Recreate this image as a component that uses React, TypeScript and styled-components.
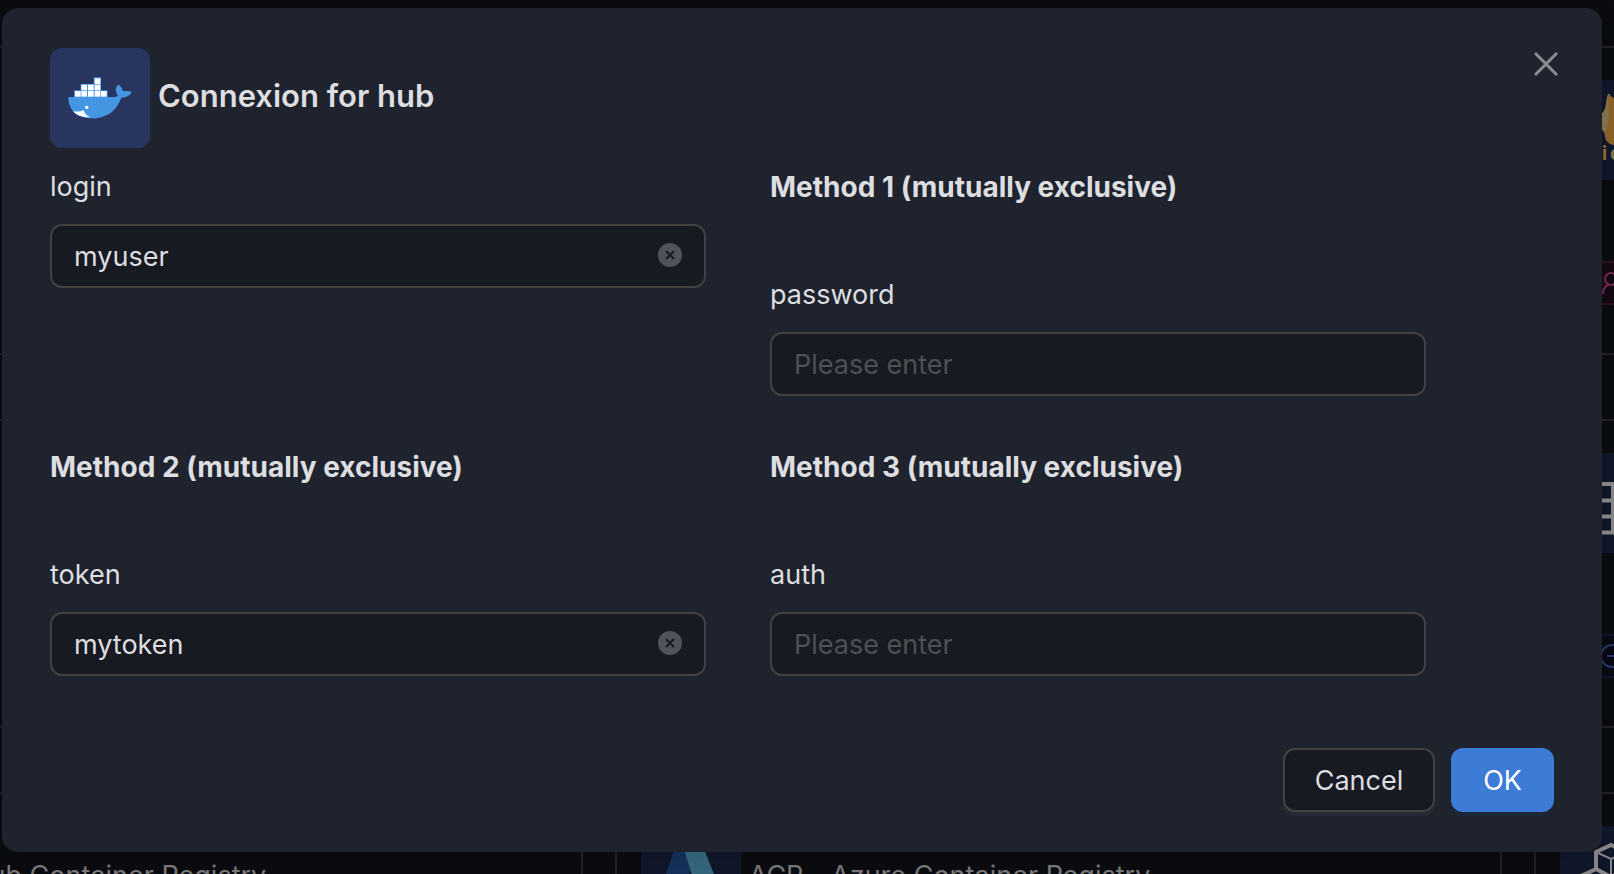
import React, { useState } from "react";
import type { ReactNode } from "react";
import styled, { createGlobalStyle } from "styled-components";

const GlobalStyle = createGlobalStyle`
  *, *::before, *::after { box-sizing: border-box; }
  body {
    margin: 0;
    background: #0b0c10;
    color: #dddee0;
    font-family: Inter, "Liberation Sans", sans-serif;
    font-size: 27px;
    line-height: 46px;
  }
  button, input { font: inherit; color: inherit; }
`;

const Page = styled.div`
  display: flex;
  position: relative;
  height: 100vh;
  overflow: hidden;
`;

const Backdrop = styled.main`
  flex: 1;
  min-width: 0;
  display: grid;
  grid-template-columns: repeat(3, 55vw);
  grid-auto-rows: min-content;
  gap: 64px 32px;
  margin-left: -305px;
  padding-top: 46px;
`;

const Card = styled.article`
  display: flex;
  flex-direction: column;
  align-items: flex-start;
  min-height: 309px;
  padding: 32px 24px 48px;
  border: 2px solid #222222;
`;

const CardHead = styled.div`
  display: flex;
  align-items: center;
  gap: 8px;
  height: 100px;
  color: #7b7b7c;
  white-space: nowrap;
`;

const CardTile = styled.span`
  width: 100px;
  height: 100px;
  background: #11172b;
  svg { display: block; }
`;

const Badge = styled.span<{ $tone: "pink" | "blue" }>`
  display: flex;
  align-items: center;
  width: 160px;
  height: 44px;
  margin: 81px 0 0 24px;
  padding-left: 12px;
  border: 2px solid ${(p) => (p.$tone === "pink" ? "#2d1222" : "#10142b")};
  background: ${(p) => (p.$tone === "pink" ? "#140811" : "#0a0a14")};
  color: ${(p) => (p.$tone === "pink" ? "#732c58" : "#263569")};
`;

const Overlay = styled.div`
  position: absolute;
  inset: 0;
  padding: 8px 12px 22px 2px;
`;

const Dialog = styled.section`
  position: relative;
  padding: 40px 48px;
  border-radius: 16px;
  background: #1f232d;
  box-shadow: 0 12px 32px rgba(0, 0, 0, 0.1);
`;

const Header = styled.header`
  display: flex;
  align-items: center;
  gap: 8px;
  margin-bottom: 16px;
`;

const LogoTile = styled.span`
  width: 100px;
  height: 100px;
  border-radius: 12px;
  background: #28355e;
  svg { display: block; }
`;

const Title = styled.h1`
  margin: 0 0 4px;
  font-size: 31px;
  font-weight: 600;
`;

const CloseButton = styled.button`
  position: absolute;
  top: 34px;
  right: 34px;
  display: grid;
  place-items: center;
  width: 44px;
  height: 44px;
  padding: 0;
  border: 0;
  background: none;
  color: #8b8d93;
`;

const Form = styled.form`
  display: flex;
  flex-direction: column;
`;

const Fields = styled.div`
  display: grid;
  grid-template-columns: 1fr 1fr;
  gap: 48px 64px;
  margin-bottom: 72px;
  padding-right: 128px;
`;

const Method = styled.h2`
  margin: 0 0 62px;
  font-size: 28px;
  font-weight: 700;
`;

const Label = styled.label`
  display: block;
  margin-bottom: 14px;
`;

const InputBox = styled.div`
  display: flex;
  align-items: center;
  height: 64px;
  padding: 0 22px 2px;
  border: 2px solid #424242;
  border-radius: 12px;
  background: #181a21;
`;

const TextInput = styled.input`
  flex: 1;
  min-width: 0;
  padding: 4px 0 0;
  border: 0;
  outline: 0;
  background: none;
  &::placeholder { color: #4e5055; opacity: 1; }
`;

const ClearButton = styled.button`
  width: 24px;
  height: 24px;
  padding: 0;
  border: 0;
  background: none;
  svg { display: block; }
`;

const Footer = styled.footer`
  display: flex;
  justify-content: flex-end;
  gap: 16px;
`;

const ActionButton = styled.button<{ $primary?: boolean }>`
  height: 64px;
  padding: 2px 30px 0;
  border: 2px solid ${(p) => (p.$primary ? "#3c7bd6" : "#424242")};
  border-radius: 12px;
  background: ${(p) => (p.$primary ? "#3c7bd6" : "#181a21")};
  color: ${(p) => (p.$primary ? "#ffffff" : "#dddee0")};
  box-shadow: 0 4px 0 ${(p) => (p.$primary ? "#1d2637" : "#272a35")};
`;

const containers = [
  [134, 91], [75, 129], [94, 129], [114, 129], [134, 129], [153, 129],
  [94, 110], [114, 110], [134, 110],
];

const DockerLogo = () => (
  <svg width="100" height="100" viewBox="0 0 300 300" aria-hidden="true">
    <path
      fill="#4495e2"
      d="M55 147H72V127H92V108H131V88H153V108V127H173V147C187 147 197 147 204 144C199 137 197 128 198 120C199 115 202 112 206 110C213 115 218 122 219 130C229 128 239 129 245 132C240 143 229 149 214 149C202 178 187 194 169 202C151 211 135 212 122 211C101 210 85 205 74 195C60 181 55 165 55 147Z"
    />
    {containers.map(([x, y]) => (
      <rect key={`${x}-${y}`} x={x} y={y} width="17" height="17" fill="#fff" />
    ))}
    <circle cx="110" cy="178" r="5" fill="#fff" />
    <path fill="#fff" d="M69 190C81 192 94 190 101 186C103 196 111 204 121 208C98 209 80 202 69 190Z" />
  </svg>
);

const AzureLogo = () => (
  <svg width="100" height="100" viewBox="0 0 100 100" aria-hidden="true">
    <path fill="#14325c" d="M38 10H62L32 92H10Z" />
    <path fill="#35697f" d="M39 10H58L90 92H64Z" />
  </svg>
);

const FlameLogo = () => (
  <svg width="100" height="100" viewBox="0 0 100 100" aria-hidden="true">
    <path fill="#867650" d="M48 14C45 22 47 29 42 33C38 38 38 46 44 52L46 60L50 64V14Z" />
    <path fill="#8c632b" d="M48 14C51 15 52 18 54 18L60 15V65H54C48 65 45 60 45 52C50 46 49 28 48 14Z" />
    <text x="42" y="80" fontSize="19" fontWeight="700" fill="#946c33">i</text>
    <text x="50" y="80" fontSize="19" fontWeight="700" fill="#867650">c</text>
  </svg>
);

const RackLogo = () => (
  <svg width="100" height="100" viewBox="0 0 100 100" fill="none" stroke="#898989" strokeWidth="4" aria-hidden="true">
    <path d="M20 31H80M20 47.5H80M20 63.5H80M20 79.5H80M53 29V81" />
  </svg>
);

const CubesLogo = () => (
  <svg width="100" height="100" viewBox="0 0 100 100" fill="none" stroke="#898989" strokeWidth="4" aria-hidden="true">
    <path d="M36 26L51 19L66 26V43L51 51L36 43ZM36 43L21 50V67L36 75L51 67V51" />
    <path strokeWidth="2" d="M36 26L51 33L66 26M51 33V51" />
  </svg>
);

const UserIcon = () => (
  <svg width="28" height="28" viewBox="0 0 28 28" fill="none" stroke="currentColor" strokeWidth="2" aria-hidden="true">
    <circle cx="13" cy="10" r="6" />
    <path d="M5 25C5 20 7 17 11 15M15 15C19 17 21 20 21 25" />
  </svg>
);

const MinusIcon = () => (
  <svg width="28" height="28" viewBox="0 0 28 28" fill="none" stroke="currentColor" strokeWidth="2" aria-hidden="true">
    <circle cx="14" cy="14" r="11" />
    <path d="M9 14H19" />
  </svg>
);

type CardData = { id: string; logo?: ReactNode; name?: string; badge?: "pink" | "blue" };

const cards: CardData[] = [
  { id: "a1" }, { id: "a2" }, { id: "a3", logo: <FlameLogo />, badge: "pink" },
  { id: "b1" }, { id: "b2" }, { id: "b3", logo: <RackLogo />, badge: "blue" },
  { id: "c1", name: "GHCR - GitHub Container Registry" },
  { id: "c2", logo: <AzureLogo />, name: "ACR - Azure Container Registry" },
  { id: "c3", logo: <CubesLogo /> },
];

type FieldProps = { name: string; method?: string; initial?: string };

const Field = ({ name, method, initial = "" }: FieldProps) => {
  const [value, setValue] = useState(initial);
  return (
    <div>
      {method && <Method>{method}</Method>}
      <Label htmlFor={name}>{name}</Label>
      <InputBox>
        <TextInput
          id={name}
          name={name}
          placeholder="Please enter"
          value={value}
          onChange={(e) => setValue(e.target.value)}
        />
        {value && (
          <ClearButton type="button" aria-label={`Clear ${name}`} onClick={() => setValue("")}>
            <svg width="24" height="24" viewBox="0 0 24 24">
              <circle cx="12" cy="12" r="12" fill="#505359" />
              <path d="M8 8L16 16M16 8L8 16" stroke="#181a21" strokeWidth="2" />
            </svg>
          </ClearButton>
        )}
      </InputBox>
    </div>
  );
};

export default function App() {
  return (
    <Page>
      <GlobalStyle />
      <Backdrop aria-hidden="true">
        {cards.map((card) => (
          <Card key={card.id}>
            <CardHead>
              <CardTile>{card.logo}</CardTile>
              {card.name}
            </CardHead>
            {card.badge && (
              <Badge $tone={card.badge}>{card.badge === "pink" ? <UserIcon /> : <MinusIcon />}</Badge>
            )}
          </Card>
        ))}
      </Backdrop>
      <Overlay>
        <Dialog role="dialog" aria-modal="true" aria-labelledby="dialog-title">
          <Header>
            <LogoTile><DockerLogo /></LogoTile>
            <Title id="dialog-title">Connexion for hub</Title>
          </Header>
          <CloseButton type="button" aria-label="Close">
            <svg width="24" height="24" viewBox="0 0 24 24" fill="none" stroke="currentColor" strokeWidth="3">
              <path d="M1 1L23 23M23 1L1 23" />
            </svg>
          </CloseButton>
          <Form onSubmit={(e) => e.preventDefault()}>
            <Fields>
              <Field name="login" initial="myuser" />
              <Field name="password" method="Method 1 (mutually exclusive)" />
              <Field name="token" method="Method 2 (mutually exclusive)" initial="mytoken" />
              <Field name="auth" method="Method 3 (mutually exclusive)" />
            </Fields>
            <Footer>
              <ActionButton type="button">Cancel</ActionButton>
              <ActionButton type="submit" $primary>OK</ActionButton>
            </Footer>
          </Form>
        </Dialog>
      </Overlay>
    </Page>
  );
}
